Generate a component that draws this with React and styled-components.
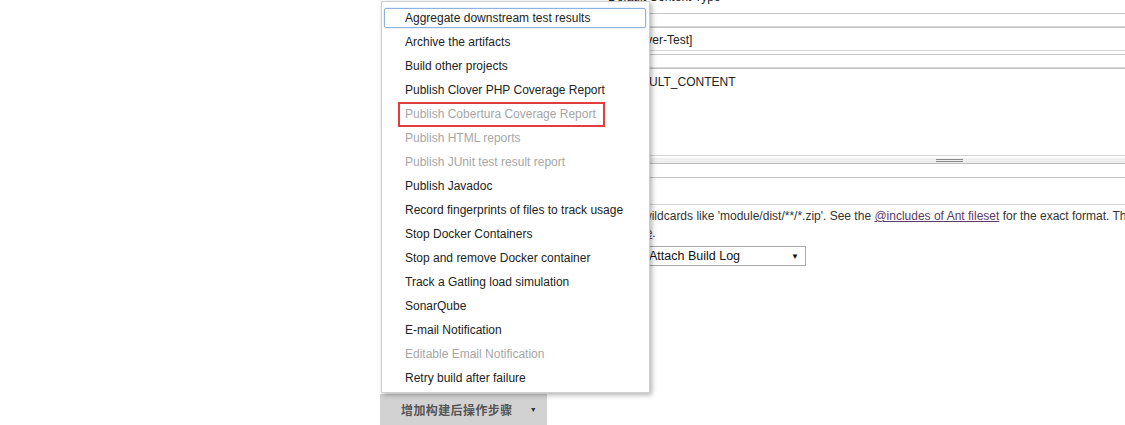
import React from "react";
import styled, { createGlobalStyle } from "styled-components";

const GlobalStyle = createGlobalStyle`
  body {
    margin: 0;
    background: #fff;
    font-family: "Liberation Sans", Arial, "Noto Sans CJK SC", sans-serif;
    color: #222;
  }
`;

const publishers = [
  { label: "Aggregate downstream test results", focused: true },
  { label: "Archive the artifacts" },
  { label: "Build other projects" },
  { label: "Publish Clover PHP Coverage Report" },
  { label: "Publish Cobertura Coverage Report", disabled: true, marked: true },
  { label: "Publish HTML reports", disabled: true },
  { label: "Publish JUnit test result report", disabled: true },
  { label: "Publish Javadoc" },
  { label: "Record fingerprints of files to track usage" },
  { label: "Stop Docker Containers" },
  { label: "Stop and remove Docker container" },
  { label: "Track a Gatling load simulation" },
  { label: "SonarQube" },
  { label: "E-mail Notification" },
  { label: "Editable Email Notification", disabled: true },
  { label: "Retry build after failure" },
];

function App() {
  return (
    <>
      <GlobalStyle />
      <Page>
        <Form>
          <ContentType>Default Content Type</ContentType>
          <Field $height={14} $top={10} />
          <Field $height={24} $inset={26} $pad={2}>
            [Clover-Test]
          </Field>
          <Field $height={14} $top={3} />
          <TextArea>
            <Field $height={88} $inset={12} $alignTop>
              $DEFAULT_CONTENT
            </Field>
            <ResizeBar>
              <Grip />
            </ResizeBar>
          </TextArea>
          <Field $height={28} $top={13} />
          <Help>
            Can use wildcards like 'module/dist/**/*.zip'. See the{" "}
            <a href="#ant">@includes of Ant fileset</a> for the exact format.
            The base directory is the
            <br />
            <a href="#ws">workspace</a>.
          </Help>
          <SelectRow>
            <Select>
              <span>Attach Build Log</span>
              <Caret>▼</Caret>
            </Select>
          </SelectRow>
        </Form>

        <ButtonWrap>
          <Menu>
            {publishers.map((p) => (
              <MenuItem
                key={p.label}
                $disabled={p.disabled}
                $focused={p.focused}
                $marked={p.marked}
              >
                {p.label}
              </MenuItem>
            ))}
          </Menu>
          <AddButton>
            <span>增加构建后操作步骤</span>
            <Caret $small>▼</Caret>
          </AddButton>
        </ButtonWrap>
      </Page>
    </>
  );
}

const Page = styled.div`
  position: relative;
  width: 1125px;
  height: 425px;
  overflow: hidden;
  display: flex;
  flex-direction: column;
`;

const Form = styled.div`
  margin-left: 598px;
  width: 560px;
  display: flex;
  flex-direction: column;
  font-size: 12px;
`;

const ContentType = styled.div`
  margin-top: -9px;
  padding-left: 10px;
  line-height: 12px;
  height: 12px;
  color: #222;
`;

const Field = styled.div`
  box-sizing: border-box;
  height: ${(p) => p.$height}px;
  margin-top: ${(p) => p.$top || 0}px;
  border: 1px solid #c4c4c4;
  border-bottom-color: #d6d6d6;
  padding-left: ${(p) => p.$inset || 3}px;
  display: flex;
  align-items: ${(p) => (p.$alignTop ? "flex-start" : "center")};
  padding-top: ${(p) => (p.$alignTop ? 6 : p.$pad || 0)}px;
  color: #222;
  white-space: nowrap;
  background: #fff;
`;

const TextArea = styled.div`
  display: flex;
  flex-direction: column;
`;

const ResizeBar = styled.div`
  box-sizing: border-box;
  height: 8px;
  background: #efefef;
  border-bottom: 1px solid #bdbdbd;
  border-top: 2px solid #fff;
  position: relative;
`;

const Grip = styled.div`
  position: absolute;
  left: 338px;
  top: 1px;
  width: 27px;
  height: 1px;
  border-top: 1px solid #8a8a8a;
  border-bottom: 1px solid #8a8a8a;
`;

const Help = styled.div`
  margin-top: 3px;
  margin-left: -3px;
  line-height: 17px;
  white-space: nowrap;
  color: #333;

  a {
    color: #5b3a67;
    text-decoration: underline;
  }
`;

const SelectRow = styled.div`
  margin-top: 4px;
  padding-left: 48px;
  display: flex;
`;

const Select = styled.div`
  box-sizing: border-box;
  width: 160px;
  height: 20px;
  border: 1px solid #a9a9a9;
  display: flex;
  align-items: center;
  padding: 0 6px 0 2px;
  font-size: 12.5px;
  color: #111;
  justify-content: space-between;
`;

const Caret = styled.span`
  font-size: ${(p) => (p.$small ? "7px" : "8px")};
  color: ${(p) => (p.$small ? "#333" : "#111")};
`;

const ButtonWrap = styled.div`
  position: relative;
  margin-top: auto;
  margin-left: 380px;
  width: 167px;
`;

const AddButton = styled.div`
  box-sizing: border-box;
  height: 31px;
  background: #d2d2d2;
  display: flex;
  align-items: center;
  justify-content: space-between;
  padding: 0 10px 0 21px;
  font-size: 12px;
  font-weight: bold;
  letter-spacing: 0.4px;
  color: #555;
`;

const Menu = styled.div`
  position: absolute;
  left: 1px;
  bottom: calc(100% + 1px);
  width: 269px;
  box-sizing: border-box;
  padding: 4px 0 2px;
  background: #fff;
  border: 1px solid #cfcfcf;
  box-shadow: 2px 2px 5px rgba(0, 0, 0, 0.3);
  z-index: 10;
`;

const MenuItem = styled.div`
  position: relative;
  height: 24px;
  line-height: 24px;
  padding-left: 23px;
  font-size: 12px;
  white-space: nowrap;
  color: ${(p) => (p.$disabled ? "#a6a6a6" : "#222")};

  &::before {
    content: "";
    display: ${(p) => (p.$focused ? "block" : "none")};
    position: absolute;
    top: 2px;
    left: 2px;
    right: 3px;
    bottom: 2px;
    border: 1px solid #8fb1dd;
    border-radius: 2px;
    box-shadow: 0 0 2px rgba(120, 160, 220, 0.5);
  }

  &::after {
    content: "";
    display: ${(p) => (p.$marked ? "block" : "none")};
    position: absolute;
    top: 0;
    left: 16px;
    width: 207px;
    height: 25px;
    box-sizing: border-box;
    border: 2px solid #e23c3c;
  }
`;

export default App;
